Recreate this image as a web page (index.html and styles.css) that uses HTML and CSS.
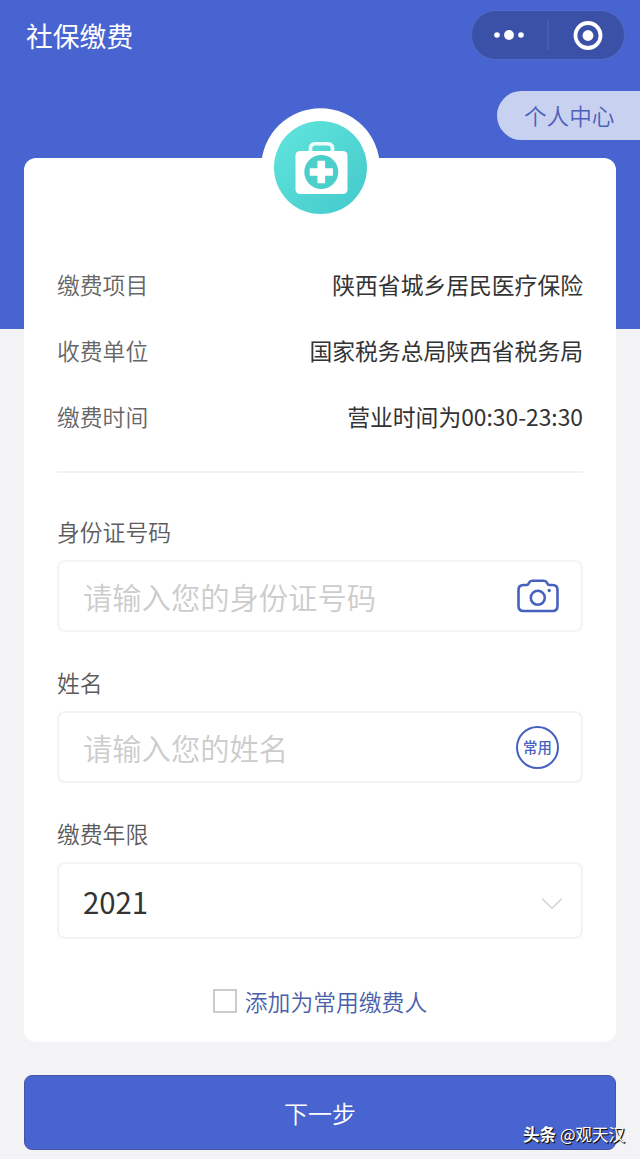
FILE: index.html
```html
<!DOCTYPE html>
<html lang="zh-CN">
<head>
<meta charset="utf-8">
<title>社保缴费</title>
<link rel="stylesheet" href="styles.css">
</head>
<body>
<div class="page">
  <header class="topbar">
    <h1 class="title">社保缴费</h1>
    <div class="capsule">
      <svg width="154" height="51" viewBox="0 0 154 51">
        <rect class="capsule-shape" x=".5" y=".5" width="153" height="49" rx="24.500"/>
        <path class="capsule-line" d="M77 10v30"/>
        <g fill="#fff"><circle cx="26" cy="25" r="2.8"/><circle cx="38" cy="25" r="4.9"/><circle cx="50" cy="25" r="2.8"/><circle cx="117" cy="25.500" r="5.4"/></g>
        <circle cx="117" cy="25.500" r="12.5" fill="none" stroke="#fff" stroke-width="3.8"/>
      </svg>
    </div>
  </header>
  <div class="center-row"><a class="center-link">个人中心</a></div>

  <main class="card">
    <div class="badge">
      <svg width="120" height="120" viewBox="0 0 120 120">
        <defs><linearGradient id="teal" x1="0" y1="0" x2="1" y2="1"><stop offset="0" stop-color="#62e5dd"/><stop offset="1" stop-color="#43c9cb"/></linearGradient></defs>
        <circle cx="60.500" cy="59.500" r="59.300" fill="#fff"/>
        <circle cx="60.500" cy="59.500" r="46.500" fill="url(#teal)"/>
        <path d="M50.500 44v-3.500q0-4.700 4.700-4.700h12.600q4.700 0 4.700 4.700v3.500" fill="none" stroke="#effffd" stroke-width="3.600"/>
        <rect x="35.500" y="43" width="52" height="43" rx="4.500" fill="#fff"/>
        <circle cx="61.300" cy="64" r="17" fill="#4bcfca"/>
        <path d="M57.500 52.700h7.600v7.500h7.800v7.600h-7.800v7.500h-7.600v-7.500h-7.800v-7.600h7.800z" fill="#fff"/>
      </svg>
    </div>
    <dl class="info">
      <div class="info-row"><dt>缴费项目</dt><dd>陕西省城乡居民医疗保险</dd></div>
      <div class="info-row"><dt>收费单位</dt><dd>国家税务总局陕西省税务局</dd></div>
      <div class="info-row"><dt>缴费时间</dt><dd>营业时间为00:30-23:30</dd></div>
    </dl>
    <div class="field">
      <div class="label">身份证号码</div>
      <div class="control">
        <span class="placeholder">请输入您的身份证号码</span>
        <svg class="camera" width="42" height="34" viewBox="0 0 42 34" fill="none" stroke="#4661c0" stroke-width="2.600">
          <path d="M6.500 6h3.300c1.400 0 1.500-.9 2.300-2.400C12.900 2 13.900 1.800 15.200 1.800h11.600c1.300 0 2.300.2 3.100 1.800.8 1.500.9 2.400 2.300 2.400h3.300c3.200 0 5 1.800 5 5v16c0 3.200-1.800 5-5 5h-29c-3.200 0-5-1.800-5-5V11c0-3.200 1.800-5 5-5z"/>
          <circle cx="20.800" cy="18.800" r="7"/>
          <circle cx="32.200" cy="11.500" r="1.700" fill="#4661c0" stroke="none"/>
        </svg>
      </div>
    </div>
    <div class="field">
      <div class="label">姓名</div>
      <div class="control">
        <span class="placeholder">请输入您的姓名</span>
        <span class="frequent">常用</span>
      </div>
    </div>
    <div class="field">
      <div class="label">缴费年限</div>
      <div class="control select">
        <span>2021</span>
        <svg class="chevron" width="22" height="13" viewBox="0 0 22 13"><path d="M1 1.500l10 9.700 10-9.700" fill="none" stroke="#d4d4d4" stroke-width="1.600"/></svg>
      </div>
    </div>
    <div class="agree"><span class="checkbox"></span><span>添加为常用缴费人</span></div>
  </main>

  <div class="next">下一步</div>
  <div class="watermark"><b>头条</b><span>@观天汉</span></div>
</div>
</body>
</html>
```

FILE: styles.css
```css
* { box-sizing: border-box; }
body {
  margin: 0;
  font-family: "Noto Sans CJK SC", sans-serif;
  font-size: 22.8px;
  font-weight: 350;
  color: #333;
}
.page {
  position: relative;
  height: 1159px;
  padding: 10px 24px 0;
  overflow: hidden;
  background: linear-gradient(#4864d0 329.500px, #f3f2f4 329.500px);
}
.topbar {
  display: flex;
  justify-content: space-between;
  height: 51px;
  margin-right: -9.500px;
}
.title {
  margin: 0 0 0 2px;
  font-size: 26.800px;
  font-weight: 400;
  line-height: 51px;
  color: #fff;
}
.capsule { margin-right: 0.500px; }
.capsule svg { display: block; }
.capsule-shape { fill: #3b51a8; stroke: #526bc6; }
.capsule-line { stroke: #536abd; }
.center-row {
  display: flex;
  justify-content: flex-end;
  margin: 30px -24px 0 0;
}
.center-link {
  width: 143px;
  height: 49px;
  padding-left: 27px;
  border-radius: 25px 0 0 25px;
  background: #c9d1f1;
  color: #4b60b8;
  font-size: 22.600px;
  line-height: 50px;
}
.card {
  position: relative;
  height: 884px;
  margin-top: 18px;
  padding: 94px 33px 0;
  border-radius: 12px;
  background: #fff;
}
.badge {
  position: absolute;
  top: -50px;
  left: 236px;
}
.badge svg { display: block; }
.info {
  height: 221px;
  margin: 0;
  border-bottom: 2px solid #f2f2f2;
}
.info-row {
  display: flex;
  justify-content: space-between;
  height: 66px;
  line-height: 65px;
}
.info-row dt { color: #666; }
.info-row dd { margin: 0; font-weight: 400; }
.field { margin-bottom: 28px; }
.info + .field { margin-top: 36px; }
.label {
  height: 51px;
  line-height: 45px;
  color: #5c5c5c;
}
.control {
  display: flex;
  align-items: center;
  justify-content: space-between;
  height: 72px;
  padding: 0 22px 0 24px;
  border: 2px solid #f3f3f3;
  border-radius: 8px;
  font-size: 29.300px;
}
.select { height: 77px; padding-right: 18px; font-weight: 400; }
.chevron { margin-top: 5px; }
.placeholder { color: #ccc; }
.frequent {
  width: 43px;
  height: 43px;
  border: 2.500px solid #4661c0;
  border-radius: 50%;
  color: #4661c0;
  font-size: 14.400px;
  font-weight: 500;
  line-height: 38px;
  text-align: center;
  white-space: nowrap;
}
.agree {
  display: flex;
  align-items: center;
  justify-content: center;
  gap: 8px;
  height: 34px;
  margin-top: 45px;
  color: #4b60aa;
}
.checkbox {
  width: 24px;
  height: 24px;
  border: 2px solid #ccc;
}
.next {
  height: 75px;
  margin-top: 33px;
  border: 1px solid #4656a5;
  border-radius: 8px;
  background: #4864d0;
  color: #fff;
  font-size: 24px;
  line-height: 74px;
  text-align: center;
}
.watermark {
  position: absolute;
  right: 15px;
  bottom: 12px;
  display: flex;
  gap: 4px;
  color: #fff;
  font-size: 16.500px;
  font-weight: 400;
  line-height: 26px;
  text-shadow: 1px 1px 1px #111, 1px 1px 0 #222;
}
.watermark b { font-weight: 700; }
```
